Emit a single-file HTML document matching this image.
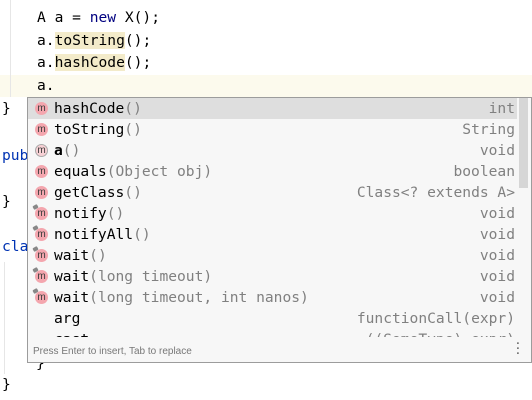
<!DOCTYPE html>
<html><head><style>
body{margin:0;width:532px;height:400px;background:#fff;overflow:hidden;position:relative;font-family:"DejaVu Sans Mono","Liberation Mono",monospace;font-size:14.6px;}
.l{position:absolute;white-space:pre;color:#000;}
.kw{color:#000080;}
.hl{background:#f3ebca;}
#cur{position:absolute;left:0;top:75px;width:532px;height:22px;background:#fcfaed;}
#pop{position:absolute;left:27px;top:97px;width:503px;height:264px;border:1px solid #9c9c9c;background:#f7f7f7;}
.r{position:absolute;left:0;width:489px;height:21px;}
.r.sel{background:#dedede;}
.ic{position:absolute;left:7px;top:4px;width:13px;height:13px;border-radius:50%;background:#f4a6ae;font-size:10px;line-height:13px;text-align:center;color:#3a3a3a;font-family:"Liberation Sans",sans-serif;}
.nm{position:absolute;left:26px;top:2px;white-space:pre;color:#000;}
.g{color:#808080;}
.t{position:absolute;right:2px;top:2px;color:#808080;white-space:pre;}
.pin::before{content:"";position:absolute;left:-2px;top:-2px;width:5px;height:4px;background:#888;transform:rotate(-30deg);border-radius:1px;}
#sb{position:absolute;left:491px;top:0;width:9px;height:90px;background:#d6d6d6;}
#ft{position:absolute;left:0;top:243px;width:503px;height:21px;font-family:"Liberation Sans",sans-serif;font-size:10px;color:#777;}
</style></head><body>
<div id="cur"></div>
<div style="position:absolute;left:10px;top:0;width:1px;height:97px;background:#e6e6e6"></div>
<div style="position:absolute;left:4px;top:262px;width:1px;height:112px;background:#e6e6e6"></div>
<div class="l" style="left:37px;top:9px">A a = <span class="kw">new</span> X();</div>
<div class="l" style="left:37px;top:32px">a.<span class="hl">toString</span>();</div>
<div class="l" style="left:37px;top:54px">a.<span class="hl">hashCode</span>();</div>
<div class="l" style="left:37px;top:77px">a.</div>
<div class="l" style="left:2px;top:100px">}</div>
<div class="l kw" style="left:2px;top:147px;color:#0033b3">pub</div>
<div class="l" style="left:2px;top:193px">}</div>
<div class="l kw" style="left:2px;top:238px;color:#0033b3">cla</div>
<div class="l" style="left:36px;top:355px">}</div>
<div class="l" style="left:2px;top:376px">}</div>
<div id="pop">
<div id="sb"></div>
<div class="r sel" style="top:0"><div class="ic">m</div><div class="nm">hashCode<span class="g">()</span></div><div class="t">int</div></div>
<div class="r" style="top:21px"><div class="ic">m</div><div class="nm">toString<span class="g">()</span></div><div class="t">String</div></div>
<div class="r" style="top:42px"><div class="ic" style="background:#f7d0d4;border:1px solid #aaa;width:11px;height:11px;line-height:11px">m</div><div class="nm"><b>a</b><span class="g">()</span></div><div class="t">void</div></div>
<div class="r" style="top:63px"><div class="ic">m</div><div class="nm">equals<span class="g">(Object obj)</span></div><div class="t">boolean</div></div>
<div class="r" style="top:84px"><div class="ic">m</div><div class="nm">getClass<span class="g">()</span></div><div class="t">Class&lt;? extends A&gt;</div></div>
<div class="r" style="top:105px"><div class="ic pin">m</div><div class="nm">notify<span class="g">()</span></div><div class="t">void</div></div>
<div class="r" style="top:126px"><div class="ic pin">m</div><div class="nm">notifyAll<span class="g">()</span></div><div class="t">void</div></div>
<div class="r" style="top:147px"><div class="ic pin">m</div><div class="nm">wait<span class="g">()</span></div><div class="t">void</div></div>
<div class="r" style="top:168px"><div class="ic pin">m</div><div class="nm">wait<span class="g">(long timeout)</span></div><div class="t">void</div></div>
<div class="r" style="top:189px"><div class="ic pin">m</div><div class="nm">wait<span class="g">(long timeout, int nanos)</span></div><div class="t">void</div></div>
<div class="r" style="top:210px"><div class="nm">arg</div><div class="t">functionCall(expr)</div></div>
<div class="r" style="top:231px;height:8px;overflow:hidden"><div class="nm">cast</div><div class="t">((SomeType) expr)</div></div>
<div id="ft"><span style="position:absolute;left:5px;top:5px">Press Enter to insert, Tab to replace</span><span style="position:absolute;right:11px;top:1px;font-weight:bold;color:#666;font-size:11px;line-height:5px">·<br>·<br>·</span></div>
</div>
</body></html>
